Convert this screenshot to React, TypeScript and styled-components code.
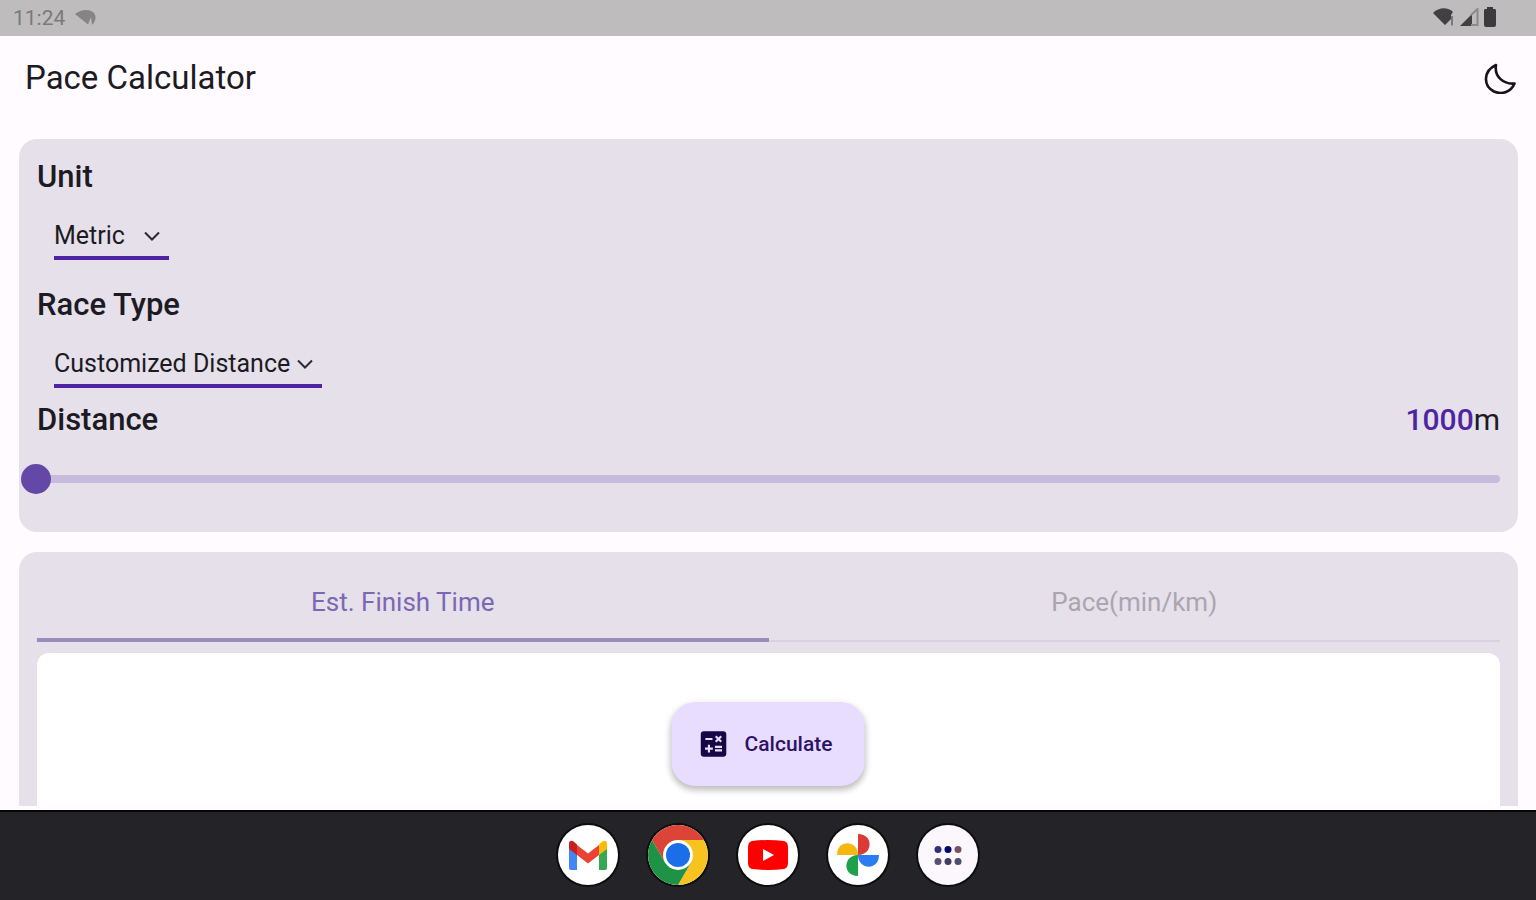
import React, { useState } from "react";
import styled, { createGlobalStyle } from "styled-components";
import { MdCalculate } from "react-icons/md";

const GlobalStyle = createGlobalStyle`
  *, *::before, *::after { box-sizing: border-box; }
  body {
    margin: 0;
    background: #fffbff;
    color: #1c1a22;
    font-family: Roboto, "Noto Sans", sans-serif;
  }
`;

const Screen = styled.div`
  display: flex;
  flex-direction: column;
  height: 100vh;
`;

const StatusBar = styled.div`
  display: flex;
  align-items: center;
  justify-content: space-between;
  flex: none;
  height: 36px;
  padding: 0 40px 0 13px;
  background: #bebcbd;
  color: #7b797a;
  font-size: 21px;
`;

const StatusGroup = styled.div<{ $gap: number }>`
  display: flex;
  align-items: center;
  gap: ${(p) => p.$gap}px;
`;

const AppBar = styled.header`
  display: flex;
  align-items: center;
  justify-content: space-between;
  flex: none;
  height: 84px;
  padding: 0 20px 0 25px;
`;

const Title = styled.h1`
  margin: 0;
  font-size: 33px;
  font-weight: 400;
  line-height: 40px;
`;

const IconButton = styled.button`
  display: flex;
  padding: 0;
  border: 0;
  background: none;
  color: #16141a;
  cursor: pointer;
`;

const Body = styled.main`
  position: relative;
  display: flex;
  flex: 1;
  flex-direction: column;
  gap: 20px;
  min-height: 0;
  padding: 19px 18px 4px 19px;
  overflow: hidden;
`;

const Card = styled.section`
  flex: none;
  padding: 18px 18px 49px;
  border-radius: 18px;
  background: #e5e0ea;
`;

const ResultCard = styled(Card)`
  display: flex;
  flex: 1;
  flex-direction: column;
  padding: 0 18px;
  border-radius: 18px 18px 0 0;
`;

const Field = styled.div<{ $after: number }>`
  display: flex;
  flex-direction: column;
  align-items: flex-start;
  gap: 19px;
  margin-bottom: ${(p) => p.$after}px;
`;

const Label = styled.label`
  font-size: 31px;
  font-weight: 500;
  line-height: 40px;
`;

const SelectBox = styled.div<{ $width: number }>`
  display: grid;
  align-items: center;
  width: ${(p) => p.$width}px;
  margin-left: 17px;
  border-bottom: 4px solid #4f24a2;

  > * { grid-area: 1 / 1; }
  > svg { justify-self: end; margin-right: 8px; pointer-events: none; }
`;

const Select = styled.select`
  width: 100%;
  height: 40px;
  padding: 0;
  border: 0;
  appearance: none;
  background: none;
  color: inherit;
  font: 400 25px/40px Roboto, "Noto Sans", sans-serif;
`;

const DistanceRow = styled.div`
  display: flex;
  justify-content: space-between;
  margin-bottom: 35px;
`;

const Distance = styled.output`
  font-size: 30px;
  line-height: 40px;

  b { color: #4f24a2; font-weight: 500; }
`;

const Track = styled.div`
  display: flex;
  align-items: center;
  height: 8px;
  border-radius: 4px;
  background: #c6bbdc;
`;

const Range = styled.input`
  flex: none;
  width: calc(100% + 30px);
  height: 30px;
  margin: 0 -16px;
  appearance: none;
  background: none;

  &::-webkit-slider-thumb {
    width: 30px;
    height: 30px;
    border: 0;
    border-radius: 50%;
    appearance: none;
    background: #6348a7;
  }
`;

const Tabs = styled.div`
  display: flex;
  flex: none;
  margin-bottom: 11px;
`;

const Tab = styled.button<{ $active: boolean }>`
  display: flex;
  flex: 1;
  align-items: flex-end;
  height: 90px;
  padding: 0;
  border: 0;
  background: none;
  color: ${(p) => (p.$active ? "#7a68b4" : "#aaa5af")};
  font: 400 26px/40px Roboto, "Noto Sans", sans-serif;
  cursor: pointer;

  span {
    flex: 1;
    padding-bottom: ${(p) => (p.$active ? 16 : 18)}px;
    border-bottom: ${(p) => (p.$active ? "4px solid #9a8dbb" : "2px solid #d8d1e0")};
  }
`;

const Panel = styled.div`
  flex: 1;
  border-radius: 12px 12px 0 0;
  background: #ffffff;
`;

const Calculate = styled.button`
  position: absolute;
  bottom: 24px;
  left: 50%;
  display: flex;
  align-items: center;
  gap: 14px;
  height: 84px;
  padding: 0 32px 0 25px;
  transform: translateX(-50%);
  border: 0;
  border-radius: 24px;
  background: #e8ddff;
  box-shadow: 0 4px 6px rgba(0, 0, 0, 0.22), 0 2px 10px rgba(0, 0, 0, 0.08);
  color: #2c1464;
  font: 500 21px/28px Roboto, "Noto Sans", sans-serif;
  cursor: pointer;

  svg { color: #160846; }
`;

const Dock = styled.nav`
  display: flex;
  align-items: center;
  justify-content: center;
  gap: 30px;
  flex: none;
  height: 90px;
  padding-bottom: 2px;
  border-top: 2px solid #060607;
  background: #242328;
`;

const AppButton = styled.button<{ $fill: string }>`
  display: flex;
  width: 60px;
  height: 60px;
  padding: 0;
  overflow: hidden;
  border: 0;
  border-radius: 50%;
  background: ${(p) => p.$fill};
  box-shadow: 0 0 0 2px #0d0d10;
  cursor: pointer;
`;

const Chevron = () => (
  <svg width="18" height="12" viewBox="0 0 18 12" fill="none" stroke="#2c2932" strokeWidth="2">
    <path d="M2 2.5 9 9.5 16 2.5" />
  </svg>
);

const Moon = () => (
  <svg width="32" height="32" viewBox="0 0 32 32" fill="none" stroke="currentColor" strokeWidth="2.6" strokeLinejoin="round">
    <path d="M12 3C-1 9 -1 24 10 29.500C18 33 27 30 30.500 21.500C20 22.500 10 15 12 3Z" />
  </svg>
);

const Notice = () => (
  <svg width="22" height="18" viewBox="0 0 22 18" fill="#868485">
    <path d="M0 5C6 0 14 0 18 3C22 7 21 12 17 16L16 8L13 15.500Z" />
  </svg>
);

const Wifi = () => (
  <svg width="22" height="20" viewBox="0 0 22 20">
    <path d="M0 6C6 0 15 0 20 5L18 8V12L12 18Z" fill="#414042" />
    <path d="M19 9V18.500" stroke="#7b797b" strokeWidth="2" />
  </svg>
);

const Signal = () => (
  <svg width="19" height="18" viewBox="0 0 19 18">
    <path d="M0 18 12 6V18Z" fill="#414042" />
    <path d="M11 7 17.500 1V17H11" fill="none" stroke="#8c8a8c" strokeWidth="2" />
  </svg>
);

const Battery = () => (
  <svg width="12" height="20" viewBox="0 0 12 20" fill="#3b3a3c">
    <path d="M3 0H9V2H11Q12 2 12 3.500V18Q12 20 10 20H2Q0 20 0 18V3.500Q0 2 1 2H3Z" />
  </svg>
);

const StatusIcons = styled(StatusGroup)`
  padding-bottom: 2px;
`;

const Gmail = () => (
  <svg width="60" height="60" viewBox="0 0 60 60">
    <path d="M11 21V43Q11 45 13 45H19V26Z" fill="#4285f4" />
    <path d="M41 26V45H47Q49 45 49 43V21Z" fill="#34a853" />
    <path d="M19 20 30 28.500 41 20V30L30 38.500 19 30Z" fill="#ea4335" />
    <path d="M11 24V19Q11 15 15 16L19 19.500V30L11 24Z" fill="#c5221f" />
    <path d="M41 30V19.500L45 16Q49 15 49 19V24Z" fill="#fbbc04" />
  </svg>
);

const Chrome = () => (
  <svg width="60" height="60" viewBox="0 0 60 60">
    <path d="M4 15A30 30 0 0 1 56 15H30L17 37.500Z" fill="#db4437" />
    <path d="M56 15A30 30 0 0 1 30 60L43 37.500 30 15Z" fill="#f9c31f" />
    <path d="M30 60A30 30 0 0 1 4 15L17 37.500Q30 48 43 37.500Z" fill="#1f9345" />
    <circle cx="30" cy="30" r="15" fill="#fff" />
    <circle cx="30" cy="30" r="12" fill="#1a6fe8" />
  </svg>
);

const YouTube = () => (
  <svg width="60" height="60" viewBox="0 0 60 60">
    <path d="M14 16Q30 14 46 16Q50 17 50 22V38Q50 43 46 44Q30 46 14 44Q10 43 10 38V22Q10 17 14 16Z" fill="#fe0000" />
    <path d="M25 24 36 30 25 36Z" fill="#fff" />
  </svg>
);

const Photos = () => (
  <svg width="60" height="60" viewBox="0 0 60 60">
    <path d="M30 9C46 9 45 30 30 30Z" fill="#dc3a34" />
    <path d="M51 30C51 46 30 45 30 30Z" fill="#2b7bf2" />
    <path d="M30 51C14 51 15 30 30 30Z" fill="#1fa04a" />
    <path d="M9 30C9 14 30 15 30 30Z" fill="#f6b80f" />
  </svg>
);

const AllApps = () => (
  <svg width="60" height="60" viewBox="0 0 60 60">
    <circle cx="20" cy="24.500" r="3.500" fill="#2f3273" />
    <circle cx="30" cy="24.500" r="3.500" fill="#07076d" />
    <circle cx="40" cy="24.500" r="3.500" fill="#79506a" />
    <circle cx="20" cy="36.500" r="3.500" fill="#55516c" />
    <circle cx="30" cy="36.500" r="3.500" fill="#403c62" />
    <circle cx="40" cy="36.500" r="3.500" fill="#504c70" />
  </svg>
);

const apps = [
  { name: "Gmail", fill: "#ffffff", icon: <Gmail /> },
  { name: "Chrome", fill: "#ffffff", icon: <Chrome /> },
  { name: "YouTube", fill: "#ffffff", icon: <YouTube /> },
  { name: "Photos", fill: "#ffffff", icon: <Photos /> },
  { name: "All apps", fill: "#fbf7fd", icon: <AllApps /> },
];

const tabs = ["Est. Finish Time", "Pace(min/km)"];

export default function App() {
  const [distance, setDistance] = useState(1000);
  const [tab, setTab] = useState(0);

  return (
    <Screen>
      <GlobalStyle />
      <StatusBar>
        <StatusGroup $gap={10}>
          <span>11:24</span>
          <Notice />
        </StatusGroup>
        <StatusIcons $gap={5}>
          <Wifi />
          <Signal />
          <Battery />
        </StatusIcons>
      </StatusBar>
      <AppBar>
        <Title>Pace Calculator</Title>
        <IconButton aria-label="Dark mode">
          <Moon />
        </IconButton>
      </AppBar>
      <Body>
        <Card>
          <Field $after={25}>
            <Label htmlFor="unit">Unit</Label>
            <SelectBox $width={115}>
              <Select id="unit" defaultValue="Metric">
                <option>Metric</option>
                <option>Imperial</option>
              </Select>
              <Chevron />
            </SelectBox>
          </Field>
          <Field $after={12}>
            <Label htmlFor="race">Race Type</Label>
            <SelectBox $width={268}>
              <Select id="race">
                <option>Customized Distance</option>
              </Select>
              <Chevron />
            </SelectBox>
          </Field>
          <DistanceRow>
            <Label htmlFor="distance">Distance</Label>
            <Distance htmlFor="distance">
              <b>{distance}</b>m
            </Distance>
          </DistanceRow>
          <Track>
            <Range
              id="distance"
              type="range"
              min={1000}
              max={100000}
              step={100}
              value={distance}
              onChange={(e) => setDistance(Number(e.target.value))}
            />
          </Track>
        </Card>
        <ResultCard>
          <Tabs role="tablist">
            {tabs.map((name, i) => (
              <Tab key={name} role="tab" aria-selected={tab === i} $active={tab === i} onClick={() => setTab(i)}>
                <span>{name}</span>
              </Tab>
            ))}
          </Tabs>
          <Panel role="tabpanel" />
        </ResultCard>
        <Calculate>
          <MdCalculate size={34} />
          Calculate
        </Calculate>
      </Body>
      <Dock>
        {apps.map((app) => (
          <AppButton key={app.name} aria-label={app.name} $fill={app.fill}>
            {app.icon}
          </AppButton>
        ))}
      </Dock>
    </Screen>
  );
}
